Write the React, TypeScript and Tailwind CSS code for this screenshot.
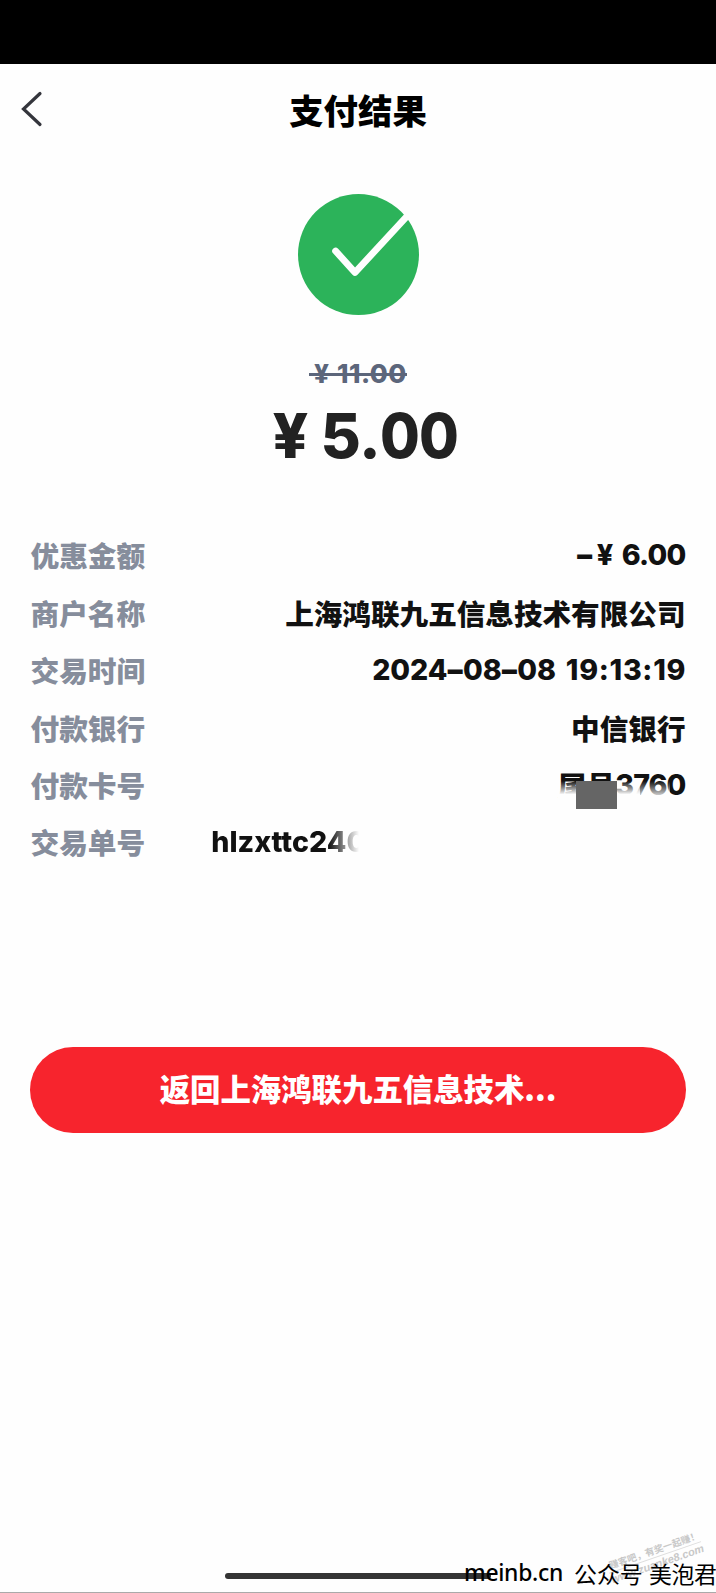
import React from "react";

const CJK = "font-['Noto_Sans_CJK_SC',sans-serif]";
const LATIN = "font-['Inter','Noto_Sans_CJK_SC',sans-serif]";
const VALUE = "text-[28.6px] leading-none text-[#111]";

function Row({ label, children }: { label: string; children: React.ReactNode }) {
  return (
    <div className="flex h-[57.4px] items-center justify-between">
      <span className="text-[28.7px] leading-none font-black text-[#868d9c]">{label}</span>
      {children}
    </div>
  );
}

function Chinese({ children }: { children: React.ReactNode }) {
  return <span className={`${CJK} ${VALUE} font-black`}>{children}</span>;
}

export default function App() {
  return (
    <div className={`${CJK} relative flex h-[1593px] w-[716px] flex-col overflow-hidden bg-[#fefefe]`}>
      <div className="h-[63.5px] shrink-0 bg-black" />

      <header className="grid h-[92px] shrink-0 grid-cols-[1fr_auto_1fr] items-center">
        <svg className="mb-[2px] ml-[20px] h-[36px] w-[24px]" viewBox="0 0 24 36" fill="none" stroke="#34353c" strokeWidth="3.2" strokeLinecap="round">
          <path d="M20 2.5 L3.5 18 L20 33.5" strokeLinejoin="miter" />
        </svg>
        <h1 className="text-[34.4px] leading-none font-black text-black">支付结果</h1>
      </header>

      <section className="flex flex-col items-center pt-[38px]">
        <svg className="h-[122px] w-[122px]" viewBox="0 0 122 122" fill="none">
          <circle cx="61.5" cy="60.6" r="60.5" fill="#2cb35a" />
          <path d="M38.6 57 L58 78.5 L112.5 19.5" stroke="#fefefe" strokeWidth="6.8" strokeLinecap="round" strokeLinejoin="round" />
        </svg>
        <div className={`${LATIN} relative mt-[44.5px] flex h-[28px] w-[98px] items-center pl-[5px] text-[26px] leading-none font-extrabold text-[#5c667b]`}>
          <span className="w-[23px]">¥</span>
          <span className="tracking-[0.5px]">11.00</span>
          <span className="absolute top-[13px] left-0 h-[2.5px] w-[98px] bg-[#5c667b]" />
        </div>
        <div className={`${LATIN} mt-[18px] flex h-[60px] w-[171px] items-center text-[62px] leading-none font-extrabold whitespace-nowrap text-[#222]`}>
          <span className="w-[48px] shrink-0">¥</span>
          <span className="tracking-[-0.5px]">5.</span>
          <span className="origin-left scale-x-[0.93] tracking-[-1px]">00</span>
        </div>
      </section>

      <section className="mt-[61px] flex flex-col px-[30.5px]">
        <Row label="优惠金额">
          <span className={`${LATIN} ${VALUE} flex font-extrabold`}>
            <span className="w-[22px] font-black">−</span>
            <span className="w-[25px]">¥</span>
            <span className="tracking-[-0.8px]">6.00</span>
          </span>
        </Row>
        <Row label="商户名称">
          <Chinese>上海鸿联九五信息技术有限公司</Chinese>
        </Row>
        <Row label="交易时间">
          <span className={`${LATIN} ${VALUE} flex font-extrabold`}>
            <span className="mr-[10px] tracking-[-0.1px]">
              2024<span className="-mx-[2px] font-black">−</span>08<span className="-mx-[2px] font-black">−</span>08
            </span>
            <span className="-mr-[0.6px] tracking-[0.7px]">19:13:19</span>
          </span>
        </Row>
        <Row label="付款银行">
          <Chinese>中信银行</Chinese>
        </Row>
        <Row label="付款卡号">
          <span className={`${VALUE} relative flex items-center font-black`}>
            <span>尾号</span>
            <span className={`${LATIN} font-extrabold tracking-[-0.9px]`}>3760</span>
            <span className="absolute top-[4px] left-0 h-[30px] w-[82px] bg-linear-to-b from-transparent from-20% to-[#fefefe] to-65%" />
            <span className="absolute top-[10px] right-[16px] h-[24px] w-[36px] bg-linear-to-b from-transparent to-[#fefefe] to-75%" />
            <span className="absolute top-[10px] right-[69px] h-[28px] w-[41px] bg-[#656565]" />
          </span>
        </Row>
        <Row label="交易单号">
          <span className={`${LATIN} mr-auto ml-[66px] bg-linear-to-r from-[#111] from-[118px] to-transparent to-[148px] bg-clip-text text-[28.6px] leading-none font-extrabold text-transparent`}>
            hlzxttc240
          </span>
        </Row>
      </section>

      <button className="mx-[30px] mt-[175.5px] h-[86px] shrink-0 rounded-full bg-[#f7242d] pb-[3px] text-[30.4px] leading-none font-black text-white">
        返回上海鸿联九五信息技术...
      </button>

      <div className="absolute bottom-[14px] left-[225px] h-[6.5px] w-[266px] rounded-full bg-[#343434]" />
      <div className="absolute right-[15px] bottom-[38px] origin-right -rotate-[19deg] text-right text-[9.5px] leading-[13px] font-bold whitespace-nowrap text-[#c8c8c8]">
        <div>赚客吧，有奖一起赚！</div>
        <div className="border-t border-[#ddd] font-['Liberation_Sans',sans-serif] text-[11px] italic">www.zuanke8.com</div>
      </div>
      <div className="absolute bottom-[8px] left-[464px] flex items-center text-[22.9px] leading-none whitespace-nowrap text-black">
        <span className="w-[110px] font-['Noto_Sans',sans-serif] font-medium tracking-[-0.3px]">meinb.cn</span>
        <span className="w-[75px]">公众号</span>
        <span className="tracking-[-0.4px]">美泡君</span>
      </div>
      <div className="absolute bottom-0 left-0 h-px w-full bg-[#aaa]" />
    </div>
  );
}
